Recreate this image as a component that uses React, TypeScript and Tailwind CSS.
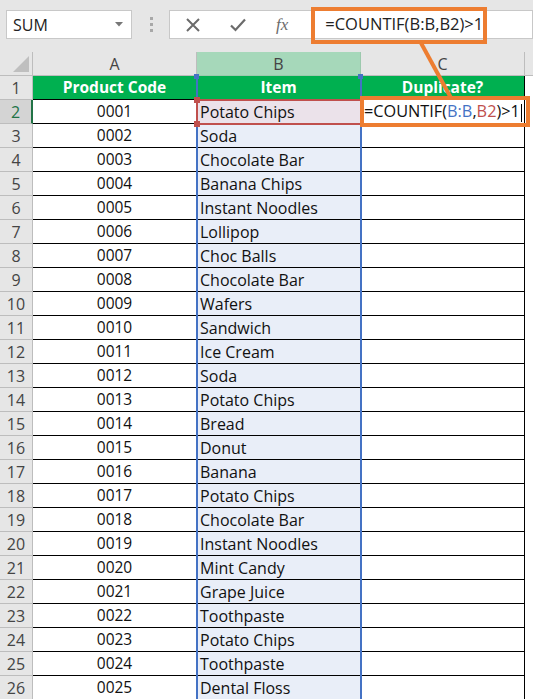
import React from "react";

const rows: [string, string][] = [
  ["0001", "Potato Chips"],
  ["0002", "Soda"],
  ["0003", "Chocolate Bar"],
  ["0004", "Banana Chips"],
  ["0005", "Instant Noodles"],
  ["0006", "Lollipop"],
  ["0007", "Choc Balls"],
  ["0008", "Chocolate Bar"],
  ["0009", "Wafers"],
  ["0010", "Sandwich"],
  ["0011", "Ice Cream"],
  ["0012", "Soda"],
  ["0013", "Potato Chips"],
  ["0014", "Bread"],
  ["0015", "Donut"],
  ["0016", "Banana"],
  ["0017", "Potato Chips"],
  ["0018", "Chocolate Bar"],
  ["0019", "Instant Noodles"],
  ["0020", "Mint Candy"],
  ["0021", "Grape Juice"],
  ["0022", "Toothpaste"],
  ["0023", "Potato Chips"],
  ["0024", "Toothpaste"],
  ["0025", "Dental Floss"],
];

function Toolbar() {
  return (
    <div className="h-[52px] flex items-center pl-[6px] pb-[3px]">
      <div className="w-[126px] h-[29px] bg-white border border-[#c8c8c8] flex items-center justify-between pl-[6px] pr-[8px]">
        <span className="text-[16px] text-[#222]">SUM</span>
        <svg width="8" height="5" viewBox="0 0 8 5">
          <path d="M0 0 L8 0 L4 4.5 Z" fill="#777" />
        </svg>
      </div>
      <div className="ml-[18px] flex flex-col gap-[3px]">
        <div className="w-[3px] h-[3px] bg-[#a8a8a8]" />
        <div className="w-[3px] h-[3px] bg-[#a8a8a8]" />
        <div className="w-[3px] h-[3px] bg-[#a8a8a8]" />
      </div>
      <div className="ml-[16px] flex-1 h-[29px] bg-white border border-[#c8c8c8] flex items-center">
        <svg className="ml-[16px]" width="14" height="14" viewBox="0 0 14 14">
          <path d="M1 1 L13 13 M13 1 L1 13" stroke="#6b6b6b" strokeWidth="2" />
        </svg>
        <svg className="ml-[30px]" width="16" height="14" viewBox="0 0 16 14">
          <path d="M1 7.5 L5.5 12 L15 1.5" stroke="#6b6b6b" strokeWidth="2.2" fill="none" />
        </svg>
        <span className="ml-[30px] text-[17px] italic text-[#6b6b6b] font-['Liberation_Serif',serif] leading-none">
          fx
        </span>
        <span className="ml-[37px] text-[16.5px] text-[#222]">=COUNTIF(B:B,B2)&gt;1</span>
      </div>
    </div>
  );
}

function HeaderRow() {
  return (
    <div className="flex h-[24px] text-[16px] text-[#444]">
      <div className="w-[33px] border-r border-b border-[#bdbdbd] bg-[#e6e6e6] relative">
        <svg className="absolute right-[3px] bottom-[3px]" width="16" height="16" viewBox="0 0 16 16">
          <path d="M16 0 L16 16 L0 16 Z" fill="#bfbfbf" />
        </svg>
      </div>
      <div className="w-[164px] border-r border-b border-[#bdbdbd] bg-[#e6e6e6] flex items-center justify-center">A</div>
      <div className="w-[164px] border-r border-b border-[#9cc9ad] bg-[#a6d8ba] flex items-center justify-center">B</div>
      <div className="w-[164px] border-r border-b border-[#bdbdbd] bg-[#e6e6e6] flex items-center justify-center">C</div>
      <div className="flex-1 border-b border-[#bdbdbd] bg-[#e6e6e6]" />
    </div>
  );
}

function TitleRow() {
  return (
    <div className="flex h-[24px] text-[15.5px]">
      <div className="w-[33px] border-r border-b border-[#bdbdbd] bg-[#e6e6e6] flex items-center justify-center text-[#444] text-[16px]">1</div>
      <div className="w-[164px] border-r border-b border-black bg-[#00b050] flex items-center justify-center font-bold text-white">Product Code</div>
      <div className="w-[164px] border-r border-b border-black bg-[#00b050] flex items-center justify-center font-bold text-white">Item</div>
      <div className="w-[164px] border-r border-b border-black bg-[#00b050] flex items-center justify-center font-bold text-white">Duplicate?</div>
      <div className="flex-1 bg-white" />
    </div>
  );
}

function DataRow({ n, code, item }: { n: number; code: string; item: string }) {
  const active = n === 2;
  return (
    <div className="flex h-[24px] text-[16px] text-[#111]">
      <div
        className={
          active
            ? "w-[33px] border-r-2 border-r-[#217346] border-b border-b-[#bdbdbd] bg-[#d4d4d4] flex items-center justify-center text-[#217346]"
            : "w-[33px] border-r border-b border-[#bdbdbd] bg-[#e6e6e6] flex items-center justify-center text-[#444]"
        }
      >
        {n}
      </div>
      <div className="w-[164px] border-r border-b border-black bg-white flex items-center justify-center text-[15.5px]">{code}</div>
      <div
        className={
          active
            ? "w-[164px] border-r border-b border-black bg-[#ebe2ea] flex items-center pl-[3px]"
            : "w-[164px] border-r border-b border-black bg-[#e9eef8] flex items-center pl-[3px]"
        }
      >
        {item}
      </div>
      <div className="w-[164px] border-r border-b border-black bg-white flex items-center pl-[3px]">
        {active ? (
          <span className="text-[16.3px] whitespace-nowrap">
            =COUNTIF(<span className="text-[#4472c4]">B:B</span>,<span className="text-[#c0504d]">B2</span>)&gt;1
            <span className="inline-block w-[1px] h-[18px] bg-black align-middle ml-[1px]" />
          </span>
        ) : null}
      </div>
      <div className="flex-1 bg-white" />
    </div>
  );
}

export default function App() {
  return (
    <div className="w-[533px] h-[699px] overflow-hidden bg-[#e6e6e6] relative font-['Open_Sans',sans-serif]">
      <Toolbar />
      <HeaderRow />
      <TitleRow />
      {rows.map(([c, i], idx) => (
        <DataRow key={idx} n={idx + 2} code={c} item={i} />
      ))}

      {/* column B selection border */}
      <div className="absolute left-[196px] top-[76px] w-[166px] h-[640px] border-l-2 border-r-2 border-[#4472c4] pointer-events-none" />
      <div className="absolute left-[194px] top-[74px] w-[5px] h-[5px] bg-[#4472c4]" />
      <div className="absolute left-[358px] top-[74px] w-[5px] h-[5px] bg-[#4472c4]" />

      {/* B2 reference border */}
      <div className="absolute left-[196px] top-[99px] w-[166px] h-[26px] border-2 border-[#c0504d] pointer-events-none" />
      <div className="absolute left-[194px] top-[97px] w-[6px] h-[6px] bg-[#c0504d]" />
      <div className="absolute left-[194px] top-[121px] w-[6px] h-[6px] bg-[#c0504d]" />

      {/* orange callouts */}
      <div className="absolute left-[311px] top-[7px] w-[176px] h-[37px] border-[4px] border-[#ed7d31]" />
      <svg className="absolute left-0 top-0" width="533" height="699" viewBox="0 0 533 699">
        <line x1="421" y1="43" x2="451" y2="98" stroke="#ed7d31" strokeWidth="4" />
      </svg>
      <div className="absolute left-[360px] top-[96px] w-[170px] h-[31px] border-[4px] border-[#ed7d31]" />
    </div>
  );
}
